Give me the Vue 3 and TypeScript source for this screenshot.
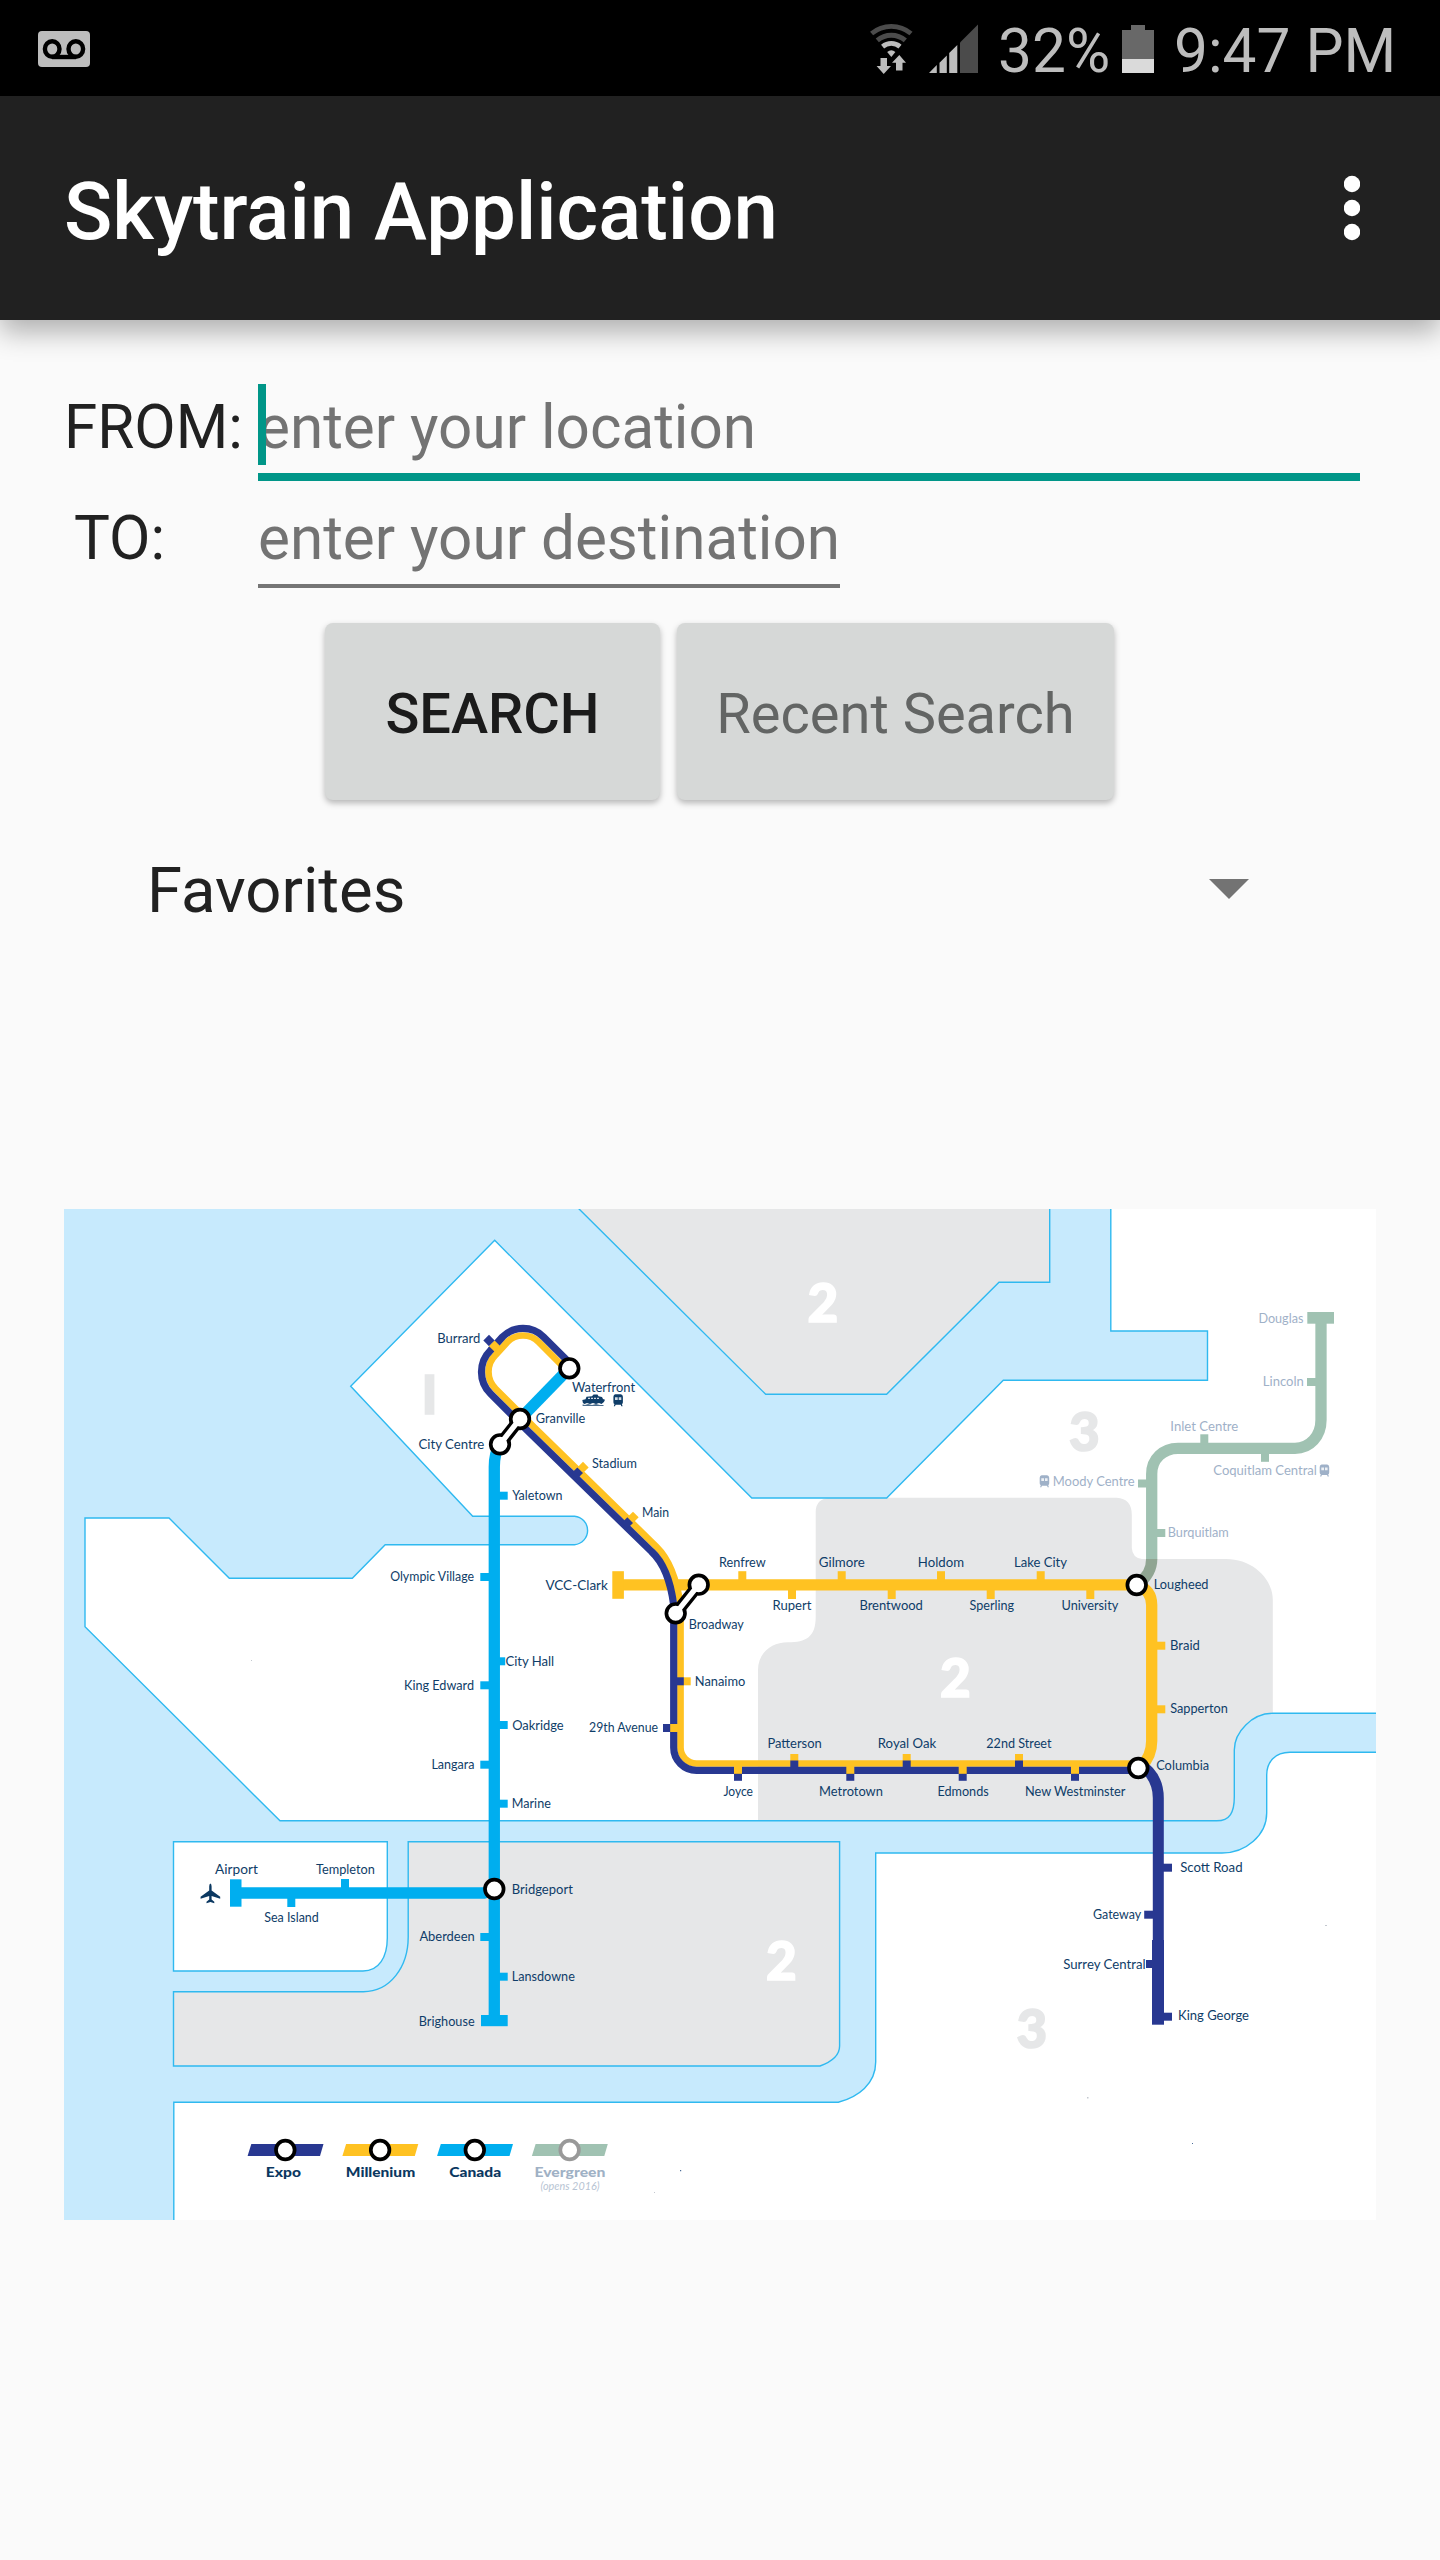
<script setup lang="ts">
import { ref } from 'vue'

type Label = [text: string, x: number, y: number, width: number]
type Rect = [x: number, y: number, width: number, height: number]

const origin = ref('')
const destination = ref('')

const labels: Label[] = [
  ['Burrard', 437.2, 1342.5, 43.2],
  ['Waterfront', 572, 1392, 63],
  ['Granville', 535.8, 1423, 49.5],
  ['City Centre', 418.5, 1448.7, 65.8],
  ['Stadium', 592, 1467.7, 45],
  ['Yaletown', 512.2, 1500.3, 50.3],
  ['Main', 642, 1517, 27],
  ['Olympic Village', 390.2, 1581, 83.8],
  ['VCC-Clark', 545.4, 1590, 62.5],
  ['City Hall', 505.4, 1666, 48.8],
  ['King Edward', 404, 1690, 70],
  ['Oakridge', 512.2, 1729.7, 51.5],
  ['Langara', 431.4, 1769, 43],
  ['Marine', 511.8, 1808.3, 39],
  ['29th Avenue', 589, 1732.3, 69],
  ['Renfrew', 719, 1567, 46.6],
  ['Gilmore', 818.8, 1567, 46],
  ['Holdom', 917.8, 1567, 46.2],
  ['Lake City', 1014, 1567.2, 53],
  ['Rupert', 772.5, 1610.4, 38.9],
  ['Brentwood', 859.4, 1610.4, 63.5],
  ['Sperling', 969.5, 1610.4, 44.5],
  ['University', 1061.5, 1610.4, 56.8],
  ['Broadway', 688.8, 1629.3, 55],
  ['Nanaimo', 694.8, 1685.7, 50.5],
  ['Patterson', 767.4, 1747.7, 54.4],
  ['Royal Oak', 877.8, 1747.7, 58.4],
  ['22nd Street', 986.3, 1747.7, 65.2],
  ['Joyce', 723.4, 1795.6, 29.6],
  ['Metrotown', 819.1, 1795.6, 63.8],
  ['Edmonds', 937.4, 1795.6, 51.3],
  ['New Westminster', 1025, 1795.6, 100.5],
  ['Lougheed', 1153.8, 1589, 54.7],
  ['Braid', 1170, 1650.3, 29.8],
  ['Sapperton', 1170.2, 1713.3, 57.6],
  ['Columbia', 1156.2, 1770.3, 53],
  ['Airport', 215, 1873.7, 42.8],
  ['Templeton', 316, 1873.7, 58.8],
  ['Sea Island', 264.3, 1921.7, 54.5],
  ['Bridgeport', 511.8, 1894, 61],
  ['Aberdeen', 419.4, 1941.3, 55.3],
  ['Lansdowne', 511.8, 1981, 63],
  ['Brighouse', 418.8, 2025.7, 55.8],
  ['Scott Road', 1180.2, 1872, 62.4],
  ['Gateway', 1093, 1919.3, 48.2],
  ['Surrey Central', 1063.2, 1968.7, 82.4],
  ['King George', 1178, 2020.3, 71],
]

const futureLabels: Label[] = [
  ['Douglas', 1258.4, 1322.7, 45],
  ['Lincoln', 1262.8, 1386.3, 41],
  ['Inlet Centre', 1170.3, 1431, 68],
  ['Coquitlam Central', 1213.3, 1475, 103.6],
  ['Moody Centre', 1052.8, 1486.3, 81.8],
  ['Burquitlam', 1167.8, 1537.3, 61],
]

const canadaStops: Rect[] = [
  [498, 1491.7, 9.7, 8],
  [480.3, 1573, 10, 8],
  [498, 1657.3, 7.2, 8],
  [480.3, 1681.3, 10, 8],
  [498, 1721, 9.7, 8],
  [480.3, 1760.7, 10, 8],
  [498, 1799.7, 9.7, 8],
  [480.3, 1933, 10, 8],
  [498, 1972.7, 9.7, 8],
  [481, 2015, 26.7, 11.2],
  [230, 1879.3, 11.5, 27.4],
  [341, 1879, 8, 10],
  [287.3, 1896, 8, 11],
]

const millenniumStops: Rect[] = [
  [612.3, 1571.2, 11.6, 27.6],
  [738.3, 1571.2, 8, 10],
  [837.7, 1571.2, 8, 10],
  [937, 1571.2, 8, 10],
  [1036.7, 1571.2, 8, 10],
  [788, 1589, 8, 10],
  [887.7, 1589, 8, 10],
  [986.7, 1589, 8, 10],
  [1086.3, 1589, 8, 10],
  [1156, 1641.7, 9.3, 8],
  [1156, 1705.3, 9.3, 8],
]

const expoStops: Rect[] = [
  [1162, 1863.7, 10, 8],
  [1144.2, 1910.7, 10, 8],
  [1146, 1960, 9, 8],
  [1162, 2012.7, 10, 8],
]

const evergreenStops: Rect[] = [
  [1307.3, 1312, 26.7, 11.7],
  [1307, 1378, 10, 8],
  [1200.3, 1434.3, 8, 10],
  [1261, 1452, 8, 9.8],
  [1138, 1479.5, 10, 8],
  [1156, 1529, 9.3, 8],
]

const upperStops = [794.3, 906.7, 1019]
const lowerStops = [738, 850.3, 962.7, 1075]

const legend = [
  { name: 'Expo', color: '#283891', ring: '#000', ink: '#0b3861', x: 0, textX: 265.8, width: 35.2 },
  { name: 'Millenium', color: '#ffc222', ring: '#000', ink: '#0b3861', x: 94.8, textX: 345.8, width: 69.4 },
  { name: 'Canada', color: '#00aeef', ring: '#000', ink: '#0b3861', x: 189.5, textX: 449.3, width: 51.8 },
  { name: 'Evergreen', color: '#a0c2b2', ring: '#999', ink: '#9fb1c5', x: 284.3, textX: 534.4, width: 71 },
]

const trains = [
  { x: 613.3, y: 1394.3, color: '#0f3d68' },
  { x: 1039.6, y: 1475.3, color: '#9fb1c8' },
  { x: 1319.6, y: 1464.5, color: '#9fb1c8' },
]
</script>

<template>
  <div class="screen">
    <header class="status">
      <svg class="voicemail" width="52" height="36" viewBox="0 0 52 36">
        <rect width="52" height="36" rx="4" fill="#bdbdbd" />
        <g fill="none" stroke="#000" stroke-width="4.4">
          <ellipse cx="14.2" cy="18" rx="7.3" ry="7.8" />
          <ellipse cx="37.8" cy="18" rx="7.3" ry="7.8" />
          <path d="M14 26H38" />
        </g>
      </svg>
      <div class="status-right">
        <svg width="110" height="52" viewBox="869 23 110 52">
          <g fill="none" stroke="#4b4b4b">
            <path d="M871.6 33.5A30.7 30.7 0 0 1 911 33.5" stroke-width="4.8" />
            <path d="M877.3 40.3A21.8 21.8 0 0 1 905.3 40.3" stroke-width="5" />
            <path d="M882.6 46.6A13.6 13.6 0 0 1 900 46.6" stroke="#bdbdbd" stroke-width="4.8" />
          </g>
          <path d="M891.3 57L887.2 52Q891.3 48.6 895.4 52Z" fill="#bdbdbd" />
          <path d="M880.5 58H887V66H891L883.7 74L876.6 66H880.5ZM896 70.5V62.8H892L899.3 55L906 62.8H902.5V70.5Z" fill="#bdbdbd" />
          <path d="M929 73L936.8 65V73ZM939.5 73V62.7L946.8 55.5V73ZM949.2 73V53L957.3 45V73Z" fill="#bdbdbd" />
          <path d="M960 73V42.5L978 24.5V73Z" fill="#4b4b4b" />
        </svg>
        <span class="percent">32%</span>
        <svg class="battery" width="32" height="48" viewBox="0 0 32 48">
          <path d="M0 5H9V0H23V5H32V48H0Z" fill="#686868" />
          <path d="M0 34H32V48H0Z" fill="#dadada" />
        </svg>
        <span class="clock">9:47 PM</span>
      </div>
    </header>

    <div class="toolbar">
      <h1>Skytrain Application</h1>
      <svg width="16" height="66" viewBox="0 0 16 66" fill="#fff">
        <circle cx="8" cy="9" r="8.2" />
        <circle cx="8" cy="33" r="8.2" />
        <circle cx="8" cy="57" r="8.2" />
      </svg>
    </div>

    <main>
      <div class="row from">
        <label>FROM:</label>
        <div class="field active"><i class="caret"></i><input v-model="origin" placeholder="enter your location" /></div>
      </div>
      <div class="row to">
        <label>TO:</label>
        <div class="field"><input v-model="destination" placeholder="enter your destination" /></div>
      </div>
      <div class="buttons">
        <button class="search">SEARCH</button>
        <button class="recent">Recent Search</button>
      </div>
      <div class="spinner">
        <span>Favorites</span>
        <svg width="40" height="20" viewBox="0 0 40 20"><path d="M0 0H40L20 20Z" fill="#737373" /></svg>
      </div>

      <svg class="map" width="1312" height="1011" viewBox="64 1209 1312 1011">
        <!-- water and land -->
        <rect x="64" y="1209" width="1312" height="1011" fill="#c7eafd" />
        <path
          d="M85 1518H169L229.3 1578.3H352.3L385.2 1544.7H574.5A14.3 14.3 0 0 0 574.5 1516.2H472.7L350.7 1386.3L494.7 1240.3L751.8 1498H886.7L1003.3 1380.3H1207.5V1331H1110.8V1200H1390V1713.3H1273C1252 1713.3 1234.3 1732 1234.3 1750V1797C1234.3 1812 1230 1820.8 1216.7 1820.8H280L85 1626.7Z"
          fill="#fff"
        />
        <path
          d="M831 1497.7H1116.7Q1131.8 1498.5 1131.8 1515V1548Q1132.5 1558 1142 1559H1226C1252 1559 1272.8 1578 1272.8 1600V1713.3C1252 1713.3 1234.3 1732 1234.3 1750V1797C1234.3 1812 1230 1820.8 1216.7 1820.8H758V1670C758 1654 770 1642.4 788 1642.3C806 1642.3 815.7 1637 815.7 1617V1512Q815.7 1498 831 1497.7Z"
          fill="#e6e7e8"
        />
        <g class="shore">
          <path
            d="M85 1518H169L229.3 1578.3H352.3L385.2 1544.7H574.5A14.3 14.3 0 0 0 574.5 1516.2H472.7L350.7 1386.3L494.7 1240.3L751.8 1498H886.7L1003.3 1380.3H1207.5V1331H1110.8V1200H1390V1713.3H1273C1252 1713.3 1234.3 1732 1234.3 1750V1797C1234.3 1812 1230 1820.8 1216.7 1820.8H280L85 1626.7Z"
            fill="none"
          />
          <path
            d="M1390 1752.3H1290C1275 1752.3 1266.7 1762 1266.7 1775V1813C1266.7 1835 1246 1853 1222 1853H875.7V2062C875.7 2084 858 2097 838.3 2102.2H173.8V2235H1390Z"
            fill="#fff"
          />
          <path
            d="M408.2 1841.7H839.6V2046C839.6 2056 831 2062 820 2066H173.5V1991.7H363.3C390 1991.7 408.2 1967 408.2 1937Z"
            fill="#e6e7e8"
          />
          <path d="M173.5 1841.7H387.3V1938C387.3 1957 379 1971 363 1971H173.5Z" fill="#fff" />
          <path d="M570 1200L765.7 1394.3H886.6L999 1282.2H1049.7V1200Z" fill="#e6e7e8" />
        </g>

        <!-- fare zones -->
        <g class="zone">
          <text x="421.500" y="1413.500" fill="#e6e7e8" stroke="#e6e7e8">I</text>
          <text x="807.500" y="1322" textLength="31.500" fill="#fff" stroke="#fff">2</text>
          <text x="940" y="1697" textLength="31.500" fill="#fff" stroke="#fff">2</text>
          <text x="766" y="1979.700" textLength="31.500" fill="#fff" stroke="#fff">2</text>
          <text x="1069" y="1450.500" textLength="28.500" fill="#e6e7e8" stroke="#e6e7e8">3</text>
          <text x="1016.500" y="2048.300" textLength="28.500" fill="#e6e7e8" stroke="#e6e7e8">3</text>
        </g>

        <!-- Evergreen line -->
        <g fill="none" stroke="#a0c2b2" stroke-width="11.3">
          <path d="M1321 1318V1420C1321 1436 1310 1448.3 1295 1448.3H1178C1163 1448.3 1151.7 1459 1151.7 1474V1559.2" />
          <path d="M1151.7 1559C1151.7 1570 1147 1577 1138 1584" stroke="#90a592" />
        </g>
        <rect v-for="(r, i) in evergreenStops" :key="'e' + i" :x="r[0]" :y="r[1]" :width="r[2]" :height="r[3]" fill="#a0c2b2" />

        <!-- Canada line -->
        <g fill="none" stroke="#00aeef" stroke-width="11.3">
          <path d="M569.3 1368.3L520 1419" />
          <path d="M500 1444Q494.3 1453 494.3 1467V2020" />
          <path d="M236 1893H484L494 1890" />
        </g>
        <rect v-for="(r, i) in canadaStops" :key="'c' + i" :x="r[0]" :y="r[1]" :width="r[2]" :height="r[3]" fill="#00aeef" />

        <!-- Millennium line -->
        <g fill="none" stroke="#ffc222">
          <path d="M618 1584.8H1137Q1151.7 1590 1151.7 1605V1741Q1151.7 1756 1141 1767" stroke-width="11.3" />
          <path
            d="M566 1369.5L538.6 1341.9A22.2 22.2 0 0 0 507.4 1341.9L495.6 1354.9A23.7 23.7 0 0 0 495.6 1388.8L532.4 1425.6L656.5 1546.8C671 1561 677.5 1584 680.5 1605V1747.5A15.9 15.9 0 0 0 696.5 1763.5H1138"
            stroke-width="6.7"
          />
        </g>
        <rect v-for="(r, i) in millenniumStops" :key="'m' + i" :x="r[0]" :y="r[1]" :width="r[2]" :height="r[3]" fill="#ffc222" />

        <!-- Expo line -->
        <g fill="none" stroke="#283891">
          <path
            d="M569 1362.3L543.6 1337A29.1 29.1 0 0 0 502.4 1337L490.6 1350.2A30.6 30.6 0 0 0 490.6 1393.8L527.4 1430.5L651.5 1551.5C664 1563 671 1584 673.7 1605V1747.5A22.8 22.8 0 0 0 696.5 1770.3H1138"
            stroke-width="7.2"
          />
          <path d="M1138 1763Q1158.3 1775 1158.3 1798V1945" stroke-width="11" />
          <path d="M1158 1940V2024.7" stroke-width="12" />
        </g>
        <rect v-for="(r, i) in expoStops" :key="'x' + i" :x="r[0]" :y="r[1]" :width="r[2]" :height="r[3]" fill="#283891" />

        <!-- shared Expo and Millennium stops -->
        <g v-for="x in upperStops" :key="x">
          <rect :x="x - 4" y="1754" width="8" height="7" fill="#ffc222" />
          <rect :x="x - 4" y="1760.5" width="8" height="7" fill="#283891" />
        </g>
        <g v-for="x in lowerStops" :key="x">
          <rect :x="x - 4" y="1766" width="8" height="8" fill="#ffc222" />
          <rect :x="x - 4" y="1773.8" width="8" height="7" fill="#283891" />
        </g>
        <rect x="676.5" y="1677.3" width="7.4" height="8" fill="#283891" />
        <rect x="683.9" y="1677.3" width="6.8" height="8" fill="#ffc222" />
        <rect x="663" y="1724" width="7.2" height="8" fill="#283891" />
        <rect x="670.2" y="1724" width="8" height="8" fill="#ffc222" />
        <g v-for="(p, i) in [[583, 1467.4], [633, 1517.3]]" :key="'d' + i" :transform="`translate(${p[0]} ${p[1]}) rotate(-45)`">
          <rect x="-4" y="-4" width="8" height="8" fill="#ffc222" />
          <rect x="-12" y="-4" width="8" height="8" fill="#283891" />
        </g>
        <g transform="translate(489 1340.5) rotate(45)">
          <rect x="-4" y="-4" width="8" height="8" fill="#283891" />
          <rect x="4" y="-4" width="8" height="8" fill="#ffc222" />
        </g>

        <!-- interchanges -->
        <g fill="#fff" stroke="#000" stroke-width="3.7">
          <circle cx="569.3" cy="1368.3" r="9.3" />
          <circle cx="1136.7" cy="1585" r="9.3" />
          <circle cx="1138.3" cy="1768" r="9.3" />
          <circle cx="494.3" cy="1889" r="9.3" />
          <circle cx="520" cy="1419" r="9.3" />
          <circle cx="500" cy="1444.3" r="9.3" />
          <circle cx="698.7" cy="1584.7" r="9.3" />
          <circle cx="675.7" cy="1613.3" r="9.3" />
        </g>
        <path d="M514.8 1425.5L505.2 1437.8M693 1591.8L681.4 1606.2" stroke="#000" stroke-width="12" />
        <path d="M517.5 1422L502.5 1441M696 1588L678.5 1609.8" stroke="#fff" stroke-width="5.3" />

        <!-- station names -->
        <g class="name">
          <text v-for="l in labels" :key="l[0]" :x="l[1]" :y="l[2]" :textLength="l[3]" lengthAdjust="spacingAndGlyphs">{{ l[0] }}</text>
        </g>
        <g class="name future">
          <text v-for="l in futureLabels" :key="l[0]" :x="l[1]" :y="l[2]" :textLength="l[3]" lengthAdjust="spacingAndGlyphs">{{ l[0] }}</text>
        </g>

        <!-- ferry, trains and airport -->
        <path
          d="M582.3 1400L585.5 1399.3L586.5 1396.8L592 1396.3L593.5 1394.5H597.5L598.5 1396.3L602 1397L603 1399L605 1399.8Q604.5 1402.5 601.5 1404L599 1403L596 1404L593 1403L590 1404L587 1403L584.5 1404Q582.3 1403 582.3 1400ZM582.6 1404.5L585 1405L588 1404.2L592 1405.1L596 1404.3L600 1405H603.5V1405.8H582.6Z"
          fill="#0f3d68"
        />
        <path d="M588 1398.3H600" stroke="#fff" stroke-width="1" stroke-dasharray="2 1" />
        <g v-for="t in trains" :key="t.x" :transform="`translate(${t.x} ${t.y})`">
          <path d="M2 0H7.5Q9.5 0 9.6 2.5V8Q9.6 9.6 8.6 9.7L9.3 12H8L7.5 10.5H2.3L1.7 12H.5L1.2 9.7Q.1 9.6.1 8V2.5Q.2 0 2 0Z" :fill="t.color" />
          <path d="M1.7 3H4.4V5.7H1.7ZM5.4 3H8V5.7H5.4Z" fill="#fff" opacity=".82" />
        </g>
        <path
          d="M210.4 1883.4Q211.6 1884 211.6 1886.5V1890.5L220.2 1896.8V1898.7L211.6 1896V1899.5L214.3 1901.8V1903.2L210.4 1902L206.5 1903.2V1901.8L209.2 1899.5V1896L200.6 1898.7V1896.8L209.2 1890.5V1886.5Q209.2 1884 210.4 1883.4Z"
          fill="#0b3861"
        />

        <!-- legend -->
        <g v-for="item in legend" :key="item.name">
          <g :transform="`translate(${item.x} 0)`">
            <path d="M251.3 2144H323.5L320 2156H247.6Z" :fill="item.color" />
            <circle cx="285.3" cy="2150" r="9.3" fill="#fff" :stroke="item.ring" stroke-width="3.7" />
          </g>
          <text class="legend-name" :x="item.textX" y="2177" :textLength="item.width" lengthAdjust="spacingAndGlyphs" :fill="item.ink">{{ item.name }}</text>
        </g>
        <text class="opens" x="540.5" y="2190.3" textLength="59" lengthAdjust="spacingAndGlyphs">(opens 2016)</text>
        <path d="M251 1660h1v1h-1zM654 2192h1v1h-1zM1087 2097h1.5v1.5h-1.5zM1325 1925h2v1h-2z" fill="#c3c8cf" />
        <path d="M680 2170h1.2v1.2h-1.2zM1192 2143h1v1h-1z" fill="#4a6c98" />
      </svg>
    </main>
  </div>
</template>

<style>
body {
  margin: 0;
  background: #fafafa;
}
</style>

<style scoped>
.screen {
  width: 1440px;
  height: 2560px;
  overflow: hidden;
  background: #fafafa;
  font-family: Roboto, "Liberation Sans", sans-serif;
  color: #212121;
}
.status {
  box-sizing: border-box;
  height: 96px;
  padding: 0 45px 0 38px;
  display: flex;
  justify-content: space-between;
  align-items: center;
  background: #000;
  color: #bdbdbd;
  font-size: 60.4px;
  line-height: 70px;
  white-space: nowrap;
}
.voicemail {
  margin-top: 2px;
}
.status-right {
  display: flex;
  align-items: center;
  padding-top: 2px;
}
.status-right span {
  padding-top: 6px;
}
.percent {
  margin-left: 19px;
  width: 124px;
}
.battery {
  margin-right: 20px;
}
.clock {
  width: 221px;
}
.toolbar {
  box-sizing: border-box;
  position: relative;
  height: 224px;
  padding: 0 80px 0 64px;
  display: flex;
  align-items: center;
  justify-content: space-between;
  background: #212121;
  color: #fff;
  box-shadow: 0 12px 26px rgba(0, 0, 0, 0.3);
}
h1 {
  margin: 8px 0 0;
  font-size: 79.8px;
  line-height: 94px;
  font-weight: 500;
}
main {
  padding: 56px 64px 0;
}
.row {
  display: flex;
  font-size: 60.2px;
}
.from {
  height: 105px;
  line-height: 103px;
}
.to {
  height: 98px;
  margin-top: 9px;
  line-height: 98px;
}
label {
  width: 194px;
}
.to label {
  box-sizing: border-box;
  padding-left: 10px;
}
.field {
  position: relative;
  box-sizing: border-box;
  width: 582px;
  border-bottom: 4px solid #757575;
}
.field.active {
  width: 1102px;
  border-bottom: 8px solid #009688;
}
.field input {
  display: block;
  box-sizing: border-box;
  width: 100%;
  height: 97px;
  margin: 0;
  padding: 0;
  border: 0;
  outline: 0;
  background: none;
  font: inherit;
  color: inherit;
}
.field.active input {
  height: 103px;
}
.field input::placeholder {
  color: #737373;
  opacity: 1;
}
.caret {
  position: absolute;
  left: 0;
  top: 8px;
  width: 8px;
  height: 81px;
  background: #009688;
}
.buttons {
  display: flex;
  gap: 17px;
  margin: 35px 0 0 261px;
}
button {
  height: 177px;
  margin: 0;
  padding: 5px 0 0;
  border: 0;
  border-radius: 8px;
  background: #d6d8d7;
  box-shadow: 0 3px 6px rgba(0, 0, 0, 0.28);
  font: 400 56px/66px Roboto, "Liberation Sans", sans-serif;
  color: #636564;
}
.search {
  width: 335px;
  font-weight: 500;
  color: #1b1b1b;
}
.recent {
  width: 437px;
}
.spinner {
  display: flex;
  align-items: center;
  justify-content: space-between;
  height: 76px;
  margin: 51px 127px 0 83px;
  font-size: 63.4px;
  line-height: 76px;
}
.spinner span {
  padding-top: 2px;
}
.map {
  display: block;
  margin-top: 282px;
}
.shore path {
  stroke: #2fb9f0;
  stroke-width: 1.4;
}
.zone text {
  font: 900 53px Lato, "Open Sans", sans-serif;
  stroke-width: 1.6;
}
.name text {
  font: 400 13.3px Lato, "Open Sans", sans-serif;
  fill: #0f3d68;
}
.name.future text {
  fill: #9fb1c8;
}
.legend-name {
  font: 900 13.3px Lato, "Open Sans", sans-serif;
}
.opens {
  font: italic 400 12px Lato, "Open Sans", sans-serif;
  fill: #b7c4d3;
}
</style>
